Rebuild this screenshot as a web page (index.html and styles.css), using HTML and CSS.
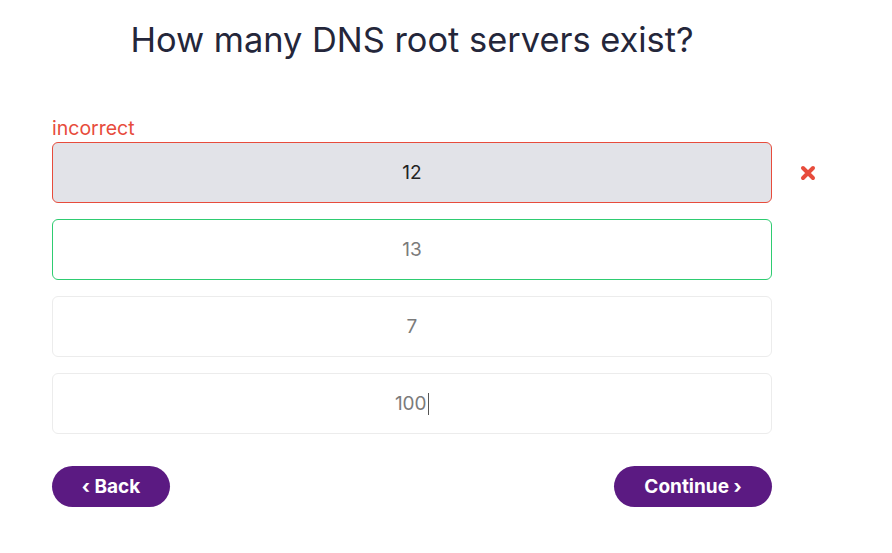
FILE: index.html
```html
<!DOCTYPE html>
<html>
<head>
<meta charset="utf-8">
<link rel="stylesheet" href="styles.css">
</head>
<body>
<div class="page">
  <h1 class="title">How many DNS root servers exist?</h1>
  <div class="label">incorrect</div>
  <div class="options">
    <div class="row">
      <div class="opt opt-wrong">12</div>
      <svg class="mark" width="16" height="16" viewBox="0 0 16 16"><path d="M3 3 L13 13 M13 3 L3 13" stroke="#e74c3c" stroke-width="4" stroke-linecap="round" fill="none"/></svg>
    </div>
    <div class="row">
      <div class="opt opt-right">13</div>
    </div>
    <div class="row">
      <div class="opt">7</div>
    </div>
    <div class="row">
      <div class="opt">100<span class="caret"></span></div>
    </div>
  </div>
  <div class="nav">
    <button class="btn btn-back">&lsaquo; Back</button>
    <button class="btn btn-next">Continue &rsaquo;</button>
  </div>
</div>
</body>
</html>
```
FILE: styles.css
```css
html, body {
  margin: 0;
  padding: 0;
  background: #fff;
}
body {
  font-family: "Inter", "Lato", sans-serif;
  color: #222;
}
.page {
  width: 720px;
  margin-left: 52px;
  padding-top: 18px;
}
.title {
  margin: 0;
  font-weight: 400;
  font-size: 34.4px;
  line-height: 44px;
  text-align: center;
  color: #24263a;
}
.label {
  margin-top: 55px;
  font-size: 19.5px;
  line-height: 22px;
  color: #e74c3c;
  height: 25px;
}
.options {
  display: flex;
  flex-direction: column;
  gap: 16px;
}
.row {
  position: relative;
}
.opt {
  height: 59px;
  border: 1px solid #ececec;
  border-radius: 6px;
  display: flex;
  align-items: center;
  justify-content: center;
  font-size: 19px;
  color: #7b7b7b;
  background: #fff;
}
.opt-wrong {
  background: #e2e3e8;
  border-color: #e74c3c;
  color: #222;
}
.opt-right {
  border-color: #2ecc71;
}
.mark {
  position: absolute;
  left: 748px;
  top: 23px;
}
.caret {
  display: inline-block;
  width: 1.5px;
  height: 22px;
  background: #555;
  margin-left: 1px;
}
.nav {
  display: flex;
  justify-content: space-between;
  margin-top: 32px;
}
.btn {
  border: none;
  background: #5b1a82;
  color: #fff;
  font-family: "Inter", "Lato", sans-serif;
  font-weight: 700;
  font-size: 19px;
  height: 41px;
  border-radius: 21px;
  padding: 0 28px;
}
.btn-back {
  width: 118px;
}
.btn-next {
  width: 158px;
}
```
